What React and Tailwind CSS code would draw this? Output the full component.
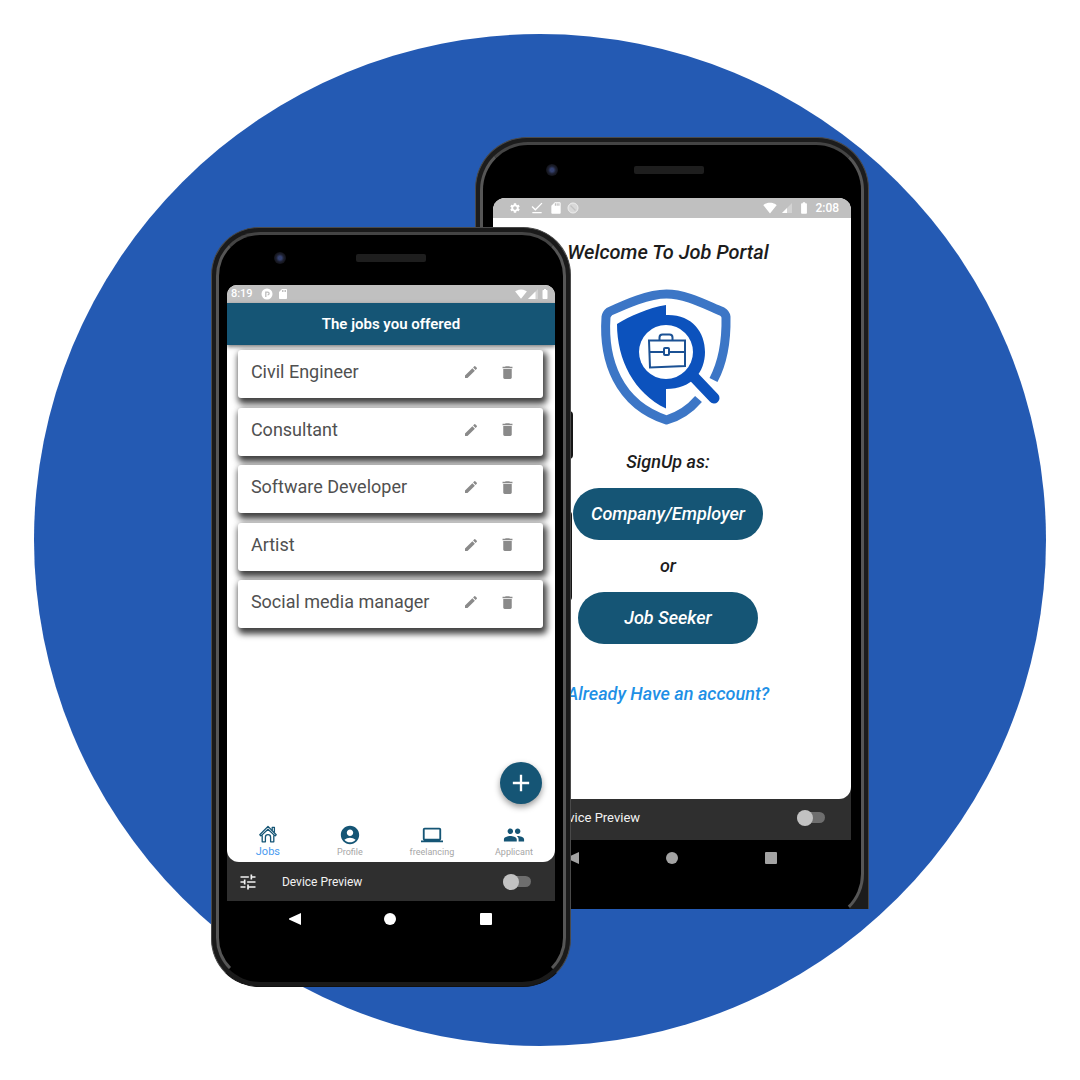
import React from "react";
import {
  MdEdit,
  MdDelete,
  MdAccountCircle,
  MdLaptop,
  MdGroup,
  MdTune,
  MdSignalWifi4Bar,
  MdSignalCellular3Bar,
  MdSignalCellular1Bar,
  MdSdCard,
  MdBatteryFull,
  MdSettings,
  MdDownloadDone,
  MdAdd,
} from "react-icons/md";

const jobs = [
  "Civil Engineer",
  "Consultant",
  "Software Developer",
  "Artist",
  "Social media manager",
];

function HomeIcon() {
  return (
    <svg
      className="h-5 w-5"
      viewBox="0 0 20 20"
      fill="none"
      stroke="#155575"
      strokeWidth="1.3"
      strokeLinejoin="round"
      aria-hidden="true"
    >
      <path d="M1.800 10.800 10 2.400l8.200 8.400-1.200 1.100L10 5.200l-7 6.700z" />
      <path d="M14.200 6.400V3.400h2.200v5.200" />
      <path d="M4.200 11.200v6.600h3.200v-4.600c0-3.400 5.200-3.400 5.200 0v4.600h3.200v-6.600" />
    </svg>
  );
}

function AppMark() {
  return (
    <svg className="h-3 w-3" viewBox="0 0 12 12" aria-hidden="true">
      <circle cx="6" cy="6" r="5.5" fill="#fff" />
      <path
        d="M4.8 9V4.200h1.800c2 0 2 2.600 0 2.600"
        fill="none"
        stroke="#bdbdbd"
        strokeWidth="1.3"
      />
    </svg>
  );
}

function FadedMark() {
  return (
    <svg className="h-3 w-3" viewBox="0 0 12 12" aria-hidden="true">
      <circle cx="6" cy="6" r="5" fill="#d8d8d8" stroke="#ededed" />
      <path d="m3.5 3.5 5 5" stroke="#c2c2c2" strokeWidth="1.2" />
    </svg>
  );
}

function PortalLogo() {
  return (
    <svg
      className="h-40 w-40"
      viewBox="0 0 160 160"
      role="img"
      aria-label="Job Portal"
    >
      <path
        d="M125.500 100C134 84 138.500 62 138 37Q137.500 33.500 134 31.500C118 25 98 14 78.500 14C60 14 38 24 21.500 31.500Q18.500 34 18 37C15 80 30 124 78.500 140C92 136 102 129 110.500 119"
        fill="none"
        stroke="#3c76c6"
        strokeWidth="9"
        strokeLinejoin="round"
      />
      <path
        d="M78 25V35C104 34 117 52 117 72C117 92 104 109 78 109V128.500C46 113 29 80 29 44C42 36 60 28 78 25Z"
        fill="#0c52bd"
      />
      <path
        d="m106 97 20 21"
        fill="none"
        stroke="#0c52bd"
        strokeWidth="11"
        strokeLinecap="round"
      />
      <circle cx="78" cy="72" r="27" fill="#fff" />
      <g fill="none" stroke="#1b5194" strokeWidth="2">
        <path d="M61 60.500H97V86L62 87.500Z" />
        <path d="M71.500 60V57.500Q71.500 54.500 74.500 54.500H81.500Q84.500 54.500 84.500 57.500V60" />
        <path d="M61 72H75.500M81.500 72H97" />
        <rect x="76" y="68" width="5" height="7" rx="1" />
      </g>
    </svg>
  );
}

function Hardware({ className }) {
  return (
    <div className={`flex items-center ${className}`}>
      <span className="h-3 w-3 rounded-full bg-[radial-gradient(circle,#34406e_0_20%,#1d2030_45%,#101014_75%)]" />
      <span className="h-2 w-[70px] rounded-xs bg-[#1e1e1e]" />
    </div>
  );
}

function PreviewBar({ id, className }) {
  return (
    <label
      htmlFor={id}
      className={`flex items-center bg-[#2f2f2f] text-[#f2f2f2] ${className}`}
    >
      <MdTune className="h-5 w-5" aria-hidden="true" />
      <span className="ml-6 flex-1">Device Preview</span>
      <span className="relative flex h-4 w-7 items-center">
        <input
          id={id}
          type="checkbox"
          role="switch"
          className="h-[11px] w-7 appearance-none rounded-full bg-[#6e6e6e]"
        />
        <span className="pointer-events-none absolute left-0 h-4 w-4 rounded-full bg-[#c2c2c2]" />
      </span>
    </label>
  );
}

function SystemKeys({ className }) {
  return (
    <div className={`flex items-center justify-between ${className}`}>
      <button type="button" aria-label="Back">
        <svg className="h-3 w-3" viewBox="0 0 12 12" fill="currentColor">
          <path d="M12 0v12L0 6.500v-1z" />
        </svg>
      </button>
      <button
        type="button"
        aria-label="Home"
        className="h-3 w-3 rounded-full bg-current"
      />
      <button
        type="button"
        aria-label="Recent apps"
        className="h-3 w-3 rounded-[1px] bg-current"
      />
    </div>
  );
}

function JobsPhone() {
  return (
    <section className="relative z-10 mt-[90px] w-1/3">
      <span className="absolute -right-0.5 top-[184px] -z-10 h-12 w-3 rounded-sm bg-[#151515]" />
      <span className="absolute -right-px top-[284px] -z-10 h-[90px] w-3 rounded-sm bg-[#151515]" />
      <div className="rounded-[48px] border border-[#4a4a4a] border-b-[#111111] bg-[#1a1a1a] p-1">
        <div className="rounded-[44px] border-[3px] border-[#565656] border-b-black border-t-[#444444] bg-black px-2 pb-[42px]">
          <Hardware className="h-[50px] gap-[70px] pb-1 pl-[47px]" />
          <div className="overflow-hidden rounded-t-[10px] bg-[#2f2f2f]">
            <div className="overflow-hidden rounded-b-xl bg-white">
              <div className="flex h-[18px] items-center bg-[#c0c0c0] px-1 text-[11px] font-medium text-white">
                <span className="mr-2">8:19</span>
                <AppMark />
                <MdSdCard className="ml-1 h-3 w-3" />
                <MdSignalWifi4Bar className="ml-auto h-3 w-3" />
                <MdSignalCellular3Bar className="h-3 w-3" />
                <MdBatteryFull className="h-3 w-3" />
              </div>
              <header className="flex h-[42px] items-center justify-center bg-[#155575] shadow-[0_2px_4px_rgba(0,0,0,0.5)]">
                <h1 className="text-[15px] font-semibold text-white">
                  The jobs you offered
                </h1>
              </header>
              <ul className="flex h-[283px] flex-col justify-between pl-[11px] pr-3 pt-[5px]">
                {jobs.map((job) => (
                  <li
                    key={job}
                    className="flex h-12 items-center rounded-[3px] bg-white pb-1 pl-[13px] pr-[27px] text-lg text-[#505050] shadow-[2px_4px_6px_2px_rgba(0,0,0,0.75)]"
                  >
                    <span className="flex-1">{job}</span>
                    <button type="button" aria-label={`Edit ${job}`}>
                      <MdEdit className="h-4 w-4 text-[#8a8a8a]" />
                    </button>
                    <button
                      type="button"
                      aria-label={`Delete ${job}`}
                      className="ml-5"
                    >
                      <MdDelete className="h-[17px] w-[17px] text-[#8a8a8a]" />
                    </button>
                  </li>
                ))}
              </ul>
              <div className="flex h-[192px] items-end justify-end px-[13px] pb-4">
                <button
                  type="button"
                  aria-label="Add a job"
                  className="flex h-[42px] w-[42px] items-center justify-center rounded-full bg-[#155575] text-white shadow-[0_3px_6px_rgba(0,0,0,0.4)]"
                >
                  <MdAdd className="h-7 w-7" />
                </button>
              </div>
              <nav className="grid h-[42px] grid-cols-4 pt-1 text-[9px] leading-3 text-[#a6a6a6]">
                <a
                  href="#jobs"
                  className="flex flex-col items-center gap-0.5 text-[11px] text-[#4a9bf0]"
                >
                  <HomeIcon />
                  Jobs
                </a>
                <a href="#profile" className="flex flex-col items-center">
                  <MdAccountCircle className="h-[22px] w-[22px] text-[#155575]" />
                  Profile
                </a>
                <a href="#freelancing" className="flex flex-col items-center">
                  <MdLaptop className="h-[22px] w-[22px] text-[#155575]" />
                  freelancing
                </a>
                <a href="#applicant" className="flex flex-col items-center">
                  <MdGroup className="h-[22px] w-[22px] text-[#155575]" />
                  Applicant
                </a>
              </nav>
            </div>
            <PreviewBar
              id="jobs-preview"
              className="h-[39px] pl-[11px] pr-6 text-xs"
            />
          </div>
          <SystemKeys className="h-9 pl-[62px] pr-[63px] text-white" />
        </div>
      </div>
    </section>
  );
}

function SignUpPhone() {
  return (
    <section className="-ml-24 w-[36.5%]">
      <div className="h-[772px] overflow-hidden rounded-t-[52px] border border-b-0 border-[#4a4a4a] bg-[#1c1c1c] px-1 pt-1">
        <div className="h-[780px] rounded-[48px] border-[3px] border-[#565656] border-b-black border-t-[#444444] bg-black px-[10px]">
          <Hardware className="h-[53px] gap-[76px] pb-1 pl-[53px]" />
          <div className="overflow-hidden rounded-t-[12px] bg-[#2f2f2f]">
            <div className="overflow-hidden rounded-b-xl bg-white">
              <div className="flex h-5 items-center gap-1 bg-[#c0c0c0] pl-4 pr-3 text-xs font-medium text-white">
                <MdSettings className="h-3 w-3" />
                <MdDownloadDone className="ml-1 h-4 w-4" />
                <MdSdCard className="h-[14px] w-[14px]" />
                <FadedMark />
                <MdSignalWifi4Bar className="ml-auto h-[14px] w-[14px]" />
                <MdSignalCellular1Bar className="h-3 w-3" />
                <MdBatteryFull className="h-[14px] w-[14px]" />
                <span>2:08</span>
              </div>
              <div className="flex flex-col items-center pb-[91px] pr-2 pt-5 text-lg font-medium italic text-[#1c1c1c]">
                <h2 className="text-xl">Welcome To Job Portal</h2>
                <div className="mt-[14px]">
                  <PortalLogo />
                </div>
                <p className="mt-2">SignUp as:</p>
                <button
                  type="button"
                  className="mt-3 h-[52px] w-[190px] rounded-full bg-[#155575] italic text-white"
                >
                  Company/Employer
                </button>
                <p className="my-3">or</p>
                <button
                  type="button"
                  className="h-[52px] w-[180px] rounded-full bg-[#155575] italic text-white"
                >
                  Job Seeker
                </button>
                <a href="#login" className="mt-9 text-[#1e90e6]">
                  Already Have an account?
                </a>
              </div>
            </div>
            <PreviewBar
              id="signup-preview"
              className="h-[41px] pb-1 pl-4 pr-[26px] text-[13px]"
            />
          </div>
          <SystemKeys className="h-9 px-[74px] text-[#a3a3a3]" />
        </div>
      </div>
    </section>
  );
}

export default function App() {
  return (
    <main className="relative flex min-h-screen items-center justify-center overflow-hidden bg-white pt-11 font-[Roboto,sans-serif]">
      <div className="absolute inset-0 m-auto aspect-square w-[93.7%] rounded-full bg-[#245ab3]" />
      <div className="relative flex w-full items-start justify-center">
        <JobsPhone />
        <SignUpPhone />
      </div>
    </main>
  );
}
